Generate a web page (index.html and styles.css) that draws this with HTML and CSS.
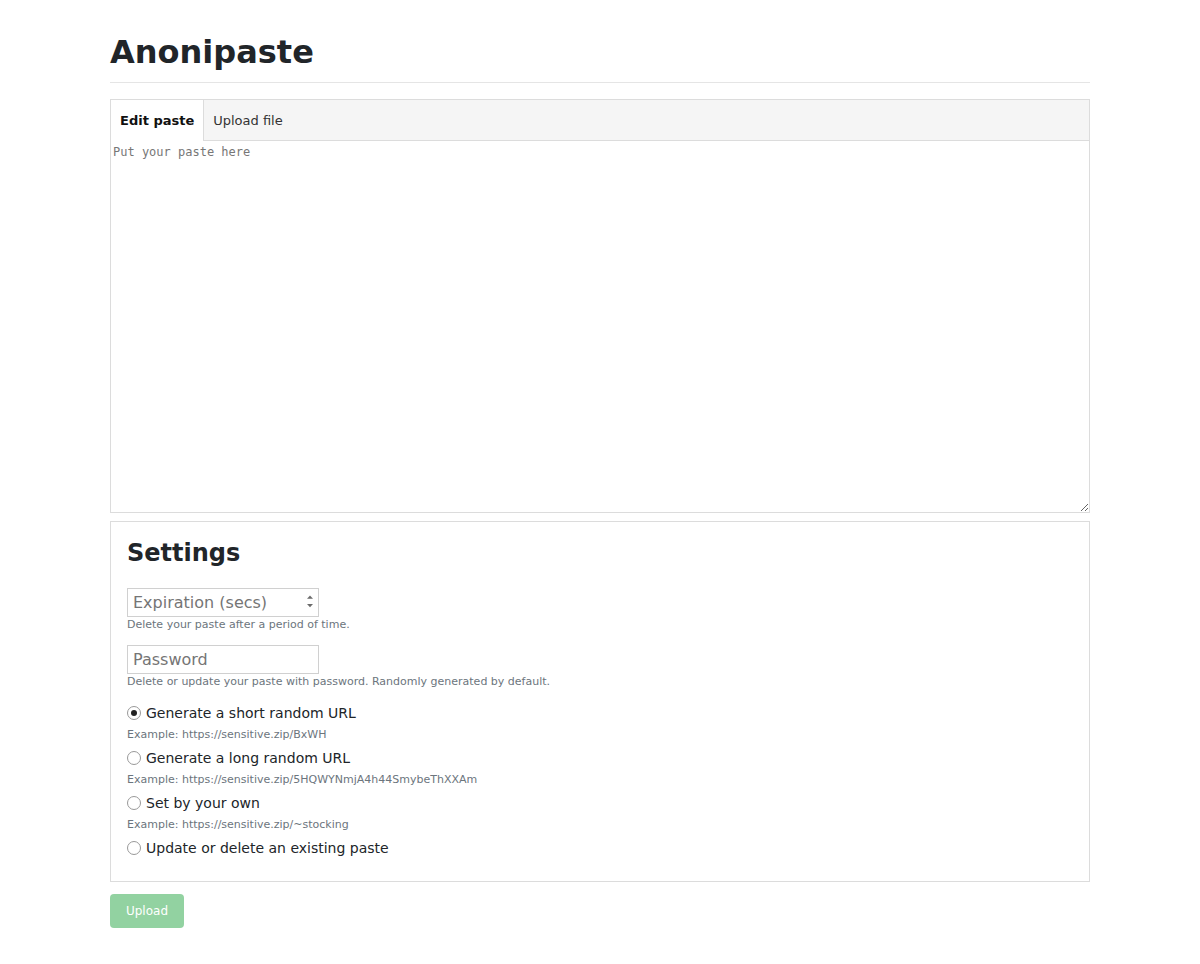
FILE: index.html
```html
<!DOCTYPE html>
<html lang="en">
<head>
<meta charset="utf-8">
<title>Anonipaste</title>
<link rel="stylesheet" href="styles.css">
</head>
<body>
<div class="container">
  <h1 class="title">Anonipaste</h1>
  <hr class="rule">
  <div class="editor">
    <div class="tabs">
      <div class="tab active">Edit paste</div>
      <div class="tab">Upload file</div>
    </div>
    <textarea class="paste" placeholder="Put your paste here"></textarea>
  </div>
  <div class="settings">
    <h2 class="settings-title">Settings</h2>
    <div class="field">
      <div class="number-wrap">
        <input class="input" type="number" placeholder="Expiration (secs)">
        <svg class="spinner" width="6" height="13" viewBox="0 0 6 13" aria-hidden="true">
          <path d="M3 0.5 L6 3.8 L0 3.8 Z" fill="#6a6a6a"/>
          <path d="M0 9 L6 9 L3 12.3 Z" fill="#6a6a6a"/>
        </svg>
      </div>
      <div class="help">Delete your paste after a period of time.</div>
    </div>
    <div class="field">
      <input class="input" type="text" placeholder="Password">
      <div class="help">Delete or update your paste with password. Randomly generated by default.</div>
    </div>
    <div class="options">
      <div class="option">
        <label class="radio"><input type="radio" name="mode" checked> Generate a short random URL</label>
        <div class="help">Example: https://sensitive.zip/BxWH</div>
      </div>
      <div class="option">
        <label class="radio"><input type="radio" name="mode"> Generate a long random URL</label>
        <div class="help">Example: https://sensitive.zip/5HQWYNmjA4h44SmybeThXXAm</div>
      </div>
      <div class="option">
        <label class="radio"><input type="radio" name="mode"> Set by your own</label>
        <div class="help">Example: https://sensitive.zip/~stocking</div>
      </div>
      <div class="option">
        <label class="radio"><input type="radio" name="mode"> Update or delete an existing paste</label>
      </div>
    </div>
  </div>
  <button class="upload" disabled>Upload</button>
</div>
</body>
</html>
```
FILE: styles.css
```css
html, body {
  margin: 0;
  padding: 0;
  background: #fff;
}
body {
  font-family: "DejaVu Sans", sans-serif;
  color: #212529;
}
.container {
  width: 980px;
  margin: 0 auto;
  padding-top: 30px;
}
.title {
  font-size: 32px;
  font-weight: bold;
  margin: 0;
  line-height: 44px;
  color: #212529;
}
.rule {
  border: 0;
  border-top: 1px solid #e5e5e5;
  margin: 8px 0 16px;
}
.editor {
  border: 1px solid #dcdcdc;
  display: flex;
  flex-direction: column;
}
.tabs {
  display: flex;
  background: #f5f5f5;
  border-bottom: 1px solid #dcdcdc;
  height: 40px;
}
.tab {
  font-size: 13px;
  padding: 0 9px;
  line-height: 42px;
  color: #333;
}
.tab.active {
  background: #fff;
  font-weight: bold;
  color: #111;
  border-right: 1px solid #dcdcdc;
  margin-bottom: -1px;
  height: 41px;
}
.paste {
  display: block;
  box-sizing: border-box;
  border: 0;
  height: 371px;
  padding: 4px 2px 2px;
  margin: 0;
  font-family: "DejaVu Sans Mono", monospace;
  font-size: 12px;
  resize: vertical;
  outline: none;
}
.paste::placeholder {
  color: #777;
}
.settings {
  border: 1px solid #dcdcdc;
  margin-top: 8px;
  padding: 16px 16px 24px;
}
.settings-title {
  margin: 0 0 20px;
  font-size: 24px;
  line-height: 30px;
  font-weight: bold;
}
.field {
  margin-bottom: 13px;
}
.number-wrap {
  position: relative;
  width: 192px;
}
.spinner {
  position: absolute;
  right: 6px;
  top: 7px;
}
.input {
  box-sizing: border-box;
  width: 192px;
  height: 29px;
  border: 1px solid #d0d0d0;
  font-family: "DejaVu Sans", sans-serif;
  font-size: 16px;
  padding: 0 5px;
  margin: 0;
  color: #212529;
  outline: none;
  display: block;
  -moz-appearance: textfield;
}
.input::-webkit-outer-spin-button,
.input::-webkit-inner-spin-button {
  -webkit-appearance: none;
  margin: 0;
}
.input::placeholder {
  color: #757575;
}
.help {
  font-size: 11px;
  color: #6c757d;
  line-height: 15px;
  margin-top: 0;
}
.options {
  display: flex;
  flex-direction: column;
  gap: 7px;
  margin-top: 15px;
}
.option .help {
  margin-top: 5px;
}
.radio {
  display: flex;
  align-items: center;
  font-size: 14px;
  line-height: 18px;
  gap: 5px;
}
.radio input {
  -webkit-appearance: none;
  appearance: none;
  margin: 0;
  width: 14px;
  height: 14px;
  border: 1px solid #999;
  border-radius: 50%;
  background: #fff;
  display: grid;
  place-items: center;
}
.radio input:checked::after {
  content: "";
  width: 6px;
  height: 6px;
  border-radius: 50%;
  background: #222;
}
.upload {
  margin-top: 12px;
  background: #28a745;
  opacity: .5;
  color: #fff;
  border: 0;
  border-radius: 4px;
  font-family: "DejaVu Sans", sans-serif;
  font-size: 12px;
  width: 74px;
  height: 34px;
  padding: 0;
}
```
